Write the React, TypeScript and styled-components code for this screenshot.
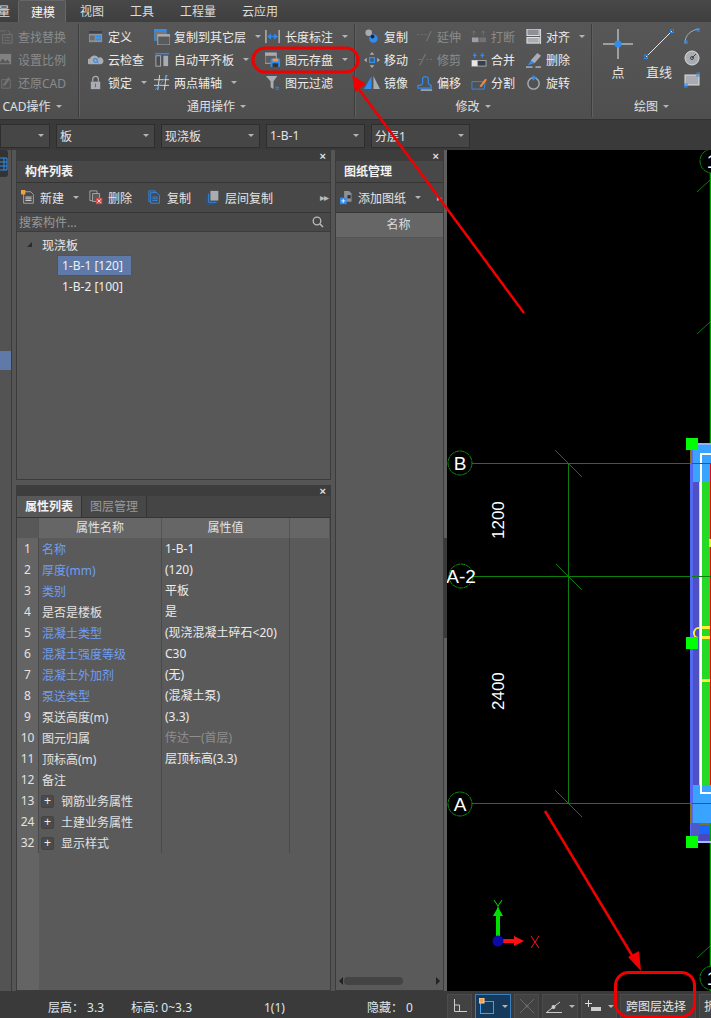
import React, { FC, ReactNode } from 'react'
import styled, { createGlobalStyle } from 'styled-components'

const GlobalStyle = createGlobalStyle`
  html, body {
    margin: 0;
    padding: 0;
    background: #3a3a3a;
  }
  body {
    font-family: "Noto Sans", "Noto Sans CJK SC", "Liberation Sans", sans-serif;
    font-size: 12px;
    color: #e4e4e4;
  }
  * { box-sizing: border-box; }
`

const B = '#2f8cf0'
const G = '#a9adb3'
const D = '#77797c'
const W = '#e6e8ea'

/* ribbon + toolbar icons, all on a 16x16 grid */
const icons: Record<string, ReactNode> = {
  find: <><rect x="5" y="6" width="10" height="9" fill="none" stroke={D} /><path d="M7 9h6M7 12h6" stroke={D} /><path d="M0 2h8M10 1l3 3-3 3" fill="none" stroke={D} /></>,
  scale: <><rect x="0" y="2" width="14" height="11" fill="#8a8a8a" /><path d="M1 12l4-5 3 3 2-2 3 4z" fill="#5a5a5a" /></>,
  restore: <><path d="M4 5h9v9H4z" fill="none" stroke={D} /><path d="M11 2L6 9l-1 3 3-1 5-7z" fill={D} /></>,
  define: <><rect x="1" y="2" width="14" height="12" fill="#8d9096" /><rect x="1" y="2" width="14" height="3" fill="#3e4045" /><rect x="8" y="7" width="6" height="2" fill={B} /><rect x="8" y="10" width="6" height="2" fill={B} /><rect x="2" y="7" width="5" height="5" fill="#6b6d72" /></>,
  cloud: <><path d="M2 13a3 3 0 010-6 5 5 0 019-1 3.500 3.500 0 013 7z" fill={G} /><circle cx="8" cy="9" r="2" fill="none" stroke={B} strokeWidth="1.300" /><path d="M9.500 10.500l2 1.500" stroke={B} /></>,
  lock: <><path d="M5 7V4.500a3 3 0 016 0V7" fill="none" stroke={G} strokeWidth="1.300" /><rect x="3" y="7" width="10" height="8" fill={G} /><rect x="7.500" y="9" width="1" height="4" fill="#666" /></>,
  copyLayer: <><rect x="0" y="0" width="13" height="12" fill="#777" stroke={B} /><rect x="0" y="0" width="13" height="3" fill={B} /><rect x="4" y="6" width="13" height="11" fill="#5a5a5a" stroke={G} /><rect x="4" y="6" width="13" height="2" fill={G} /></>,
  align: <><rect x="1" y="1" width="15" height="1.500" fill={B} /><rect x="2" y="4" width="5" height="11" fill="#4d4d4d" stroke={G} /><rect x="10" y="4" width="5" height="11" fill={G} /></>,
  axis: <><path d="M0 5h16M0 11h16M6 0L4 16M13 0l-2 16" stroke={W} strokeWidth="0.900" /><path d="M1 16L15 0" stroke={B} /></>,
  dim: <><path d="M1 1v14M15 1v14" stroke={W} /><path d="M3 8h10M3 8l3-2.500v5zM13 8l-3-2.500v5z" stroke={B} fill={B} /></>,
  save: <><rect x="0" y="1" width="12" height="11" fill="#5b5d61" stroke={G} /><rect x="0" y="1" width="12" height="3" fill={G} /><rect x="6" y="7" width="10" height="9" fill={B} /><rect x="8" y="7" width="6" height="3" fill="#f59a3c" /><rect x="8" y="12" width="6" height="4" fill="#333" /></>,
  filter: <><path d="M1 1h12L9 7v8l-3-2V7z" fill={G} /><path d="M11 13h4M11 15h4" stroke={B} /></>,
  mcopy: <><circle cx="5" cy="4" r="3.500" fill={G} /><circle cx="10" cy="10" r="4.500" fill={B} /><circle cx="9" cy="8" r="2" fill="#222" /></>,
  move: <><rect x="6" y="6" width="5" height="5" fill="none" stroke={B} strokeWidth="1.500" /><path d="M8.500 0l-2.500 3h5zM8.500 17l-2.500-3h5zM0 8.500l3-2.500v5zM17 8.500l-3-2.500v5z" fill={G} /></>,
  mirror: <><path d="M8 1L0 15h8z" fill={B} /><path d="M10 1l7 14h-7z" fill={G} /></>,
  extend: <><path d="M0 6h2M4 6h2M8 6h2" stroke={D} /><path d="M10 13L15 2" stroke={D} strokeWidth="1.300" /></>,
  trim: <><path d="M1 8h4M10 8h2M14 8h2" stroke={D} /><path d="M3 14L9 2" stroke={D} strokeWidth="1.300" /></>,
  offset: <><path d="M1 14v-3h3l2-2V4a2 2 0 012-2h2a2 2 0 012 2v5l2 2h1v3z" fill="none" stroke={B} strokeWidth="1.300" /><path d="M4 16h12" stroke={W} /></>,
  breakIt: <><rect x="1" y="9" width="7" height="5" fill={G} /><rect x="9" y="9" width="7" height="5" fill={D} /><path d="M3 2v5M1 4l2-2 2 2M13 2v5M11 4l2-2 2 2" fill="none" stroke={D} /></>,
  merge: <><rect x="1" y="9" width="15" height="6" fill="#3b3e44" stroke={G} /><rect x="1" y="9" width="6" height="6" fill={W} /><path d="M4 1v5M2 3.500h4M12 1v5M10 3.500h4" stroke={B} strokeWidth="1.300" /></>,
  split: <><path d="M1 7h14l-1 8H1z" fill="none" stroke={B} /><path d="M5 7l2 8M9 12l6-8 2 1-6 8z" fill="#f0883a" stroke="none" /></>,
  alignIt: <><rect x="1" y="0" width="13" height="7" fill="#8d9096" stroke={W} /><rect x="1" y="9" width="13" height="6" fill={G} stroke={W} /><path d="M15.500 0v16" stroke={W} /></>,
  erase: <><path d="M5 9L12 1l4 3-7 8z" fill={G} /><path d="M5 9l-3 5 7-2z" fill={B} /><path d="M0 16h7M10 16h6" stroke={W} /></>,
  rotate: <><circle cx="8" cy="9" r="6" fill="none" stroke={G} strokeWidth="1.500" /><path d="M7 0l5 3-5 3z" fill={B} /></>,
  newDoc: <><path d="M3 2h8l3 3v10H3z" fill="none" stroke={G} /><path d="M5 8h7M5 10h7M5 12h7" stroke={W} /><rect x="0" y="0" width="5" height="5" fill="#f2a03c" /></>,
  delDoc: <><path d="M1 1h8v11H1z" fill="none" stroke={G} /><path d="M4 4h8v9H4z" fill="#5a5a5a" stroke={G} /><rect x="8" y="9" width="7" height="7" fill="#d84a4a" /><path d="M9.500 10.500l4 4M13.500 10.500l-4 4" stroke="#fff" /></>,
  copyDoc: <><path d="M1 1h7v12H1z" fill="none" stroke={B} /><path d="M3 3h7l3 3v9H3z" fill="#4a4a4a" stroke={B} /><path d="M5 8h6M5 10h6M5 12h6" stroke={B} /></>,
  floorDoc: <><rect x="5" y="1" width="9" height="11" fill={G} /><path d="M3 4v10h9" fill="none" stroke={B} /><path d="M1 6v10h9" fill="none" stroke="#24598f" /></>,
  addDoc: <><path d="M5 0h6l3 3v10H5z" fill="#8d9096" /><rect x="9" y="5" width="4" height="4" fill="#333" /><rect x="0" y="8" width="8" height="8" fill={B} /><path d="M4 9.500v5M1.500 12h5" stroke="#fff" /></>,
}

const Icon: FC<{ name: string; size?: number }> = ({ name, size = 16 }) => (
  <IconSvg width={size} height={size} viewBox="0 0 17 17">{icons[name]}</IconSvg>
)

const ribbonGroups = [
  {
    label: 'CAD操作', width: 79, pad: -2, labelShift: 14,
    cols: [{ w: 79, tools: [
      { icon: 'find', text: '查找替换', off: true },
      { icon: 'scale', text: '设置比例', off: true },
      { icon: 'restore', text: '还原CAD', off: true },
    ] }],
  },
  {
    label: '通用操作', width: 276, pad: 9, labelShift: 0,
    cols: [
      { w: 66, tools: [
        { icon: 'define', text: '定义' },
        { icon: 'cloud', text: '云检查' },
        { icon: 'lock', text: '锁定', caret: true },
      ] },
      { w: 111, tools: [
        { icon: 'copyLayer', text: '复制到其它层', caret: true },
        { icon: 'align', text: '自动平齐板', caret: true },
        { icon: 'axis', text: '两点辅轴', caret: true },
      ] },
      { w: 88, tools: [
        { icon: 'dim', text: '长度标注', caret: true },
        { icon: 'save', text: '图元存盘', caret: true },
        { icon: 'filter', text: '图元过滤' },
      ] },
    ],
  },
  {
    label: '修改', width: 237, pad: 9, labelShift: 0,
    cols: [
      { w: 53, tools: [
        { icon: 'mcopy', text: '复制' },
        { icon: 'move', text: '移动' },
        { icon: 'mirror', text: '镜像' },
      ] },
      { w: 54, tools: [
        { icon: 'extend', text: '延伸', off: true },
        { icon: 'trim', text: '修剪', off: true },
        { icon: 'offset', text: '偏移' },
      ] },
      { w: 55, tools: [
        { icon: 'breakIt', text: '打断', off: true },
        { icon: 'merge', text: '合并' },
        { icon: 'split', text: '分割' },
      ] },
      { w: 60, tools: [
        { icon: 'alignIt', text: '对齐', caret: true },
        { icon: 'erase', text: '删除' },
        { icon: 'rotate', text: '旋转' },
      ] },
    ],
  },
]

const selects = [
  { w: 50, text: '' },
  { w: 99, text: '板' },
  { w: 99, text: '现浇板' },
  { w: 99, text: '1-B-1' },
  { w: 99, text: '分层1' },
]

const props = [
  { n: 1, name: '名称', value: '1-B-1', pub: true },
  { n: 2, name: '厚度(mm)', value: '(120)', pub: true },
  { n: 3, name: '类别', value: '平板', pub: true },
  { n: 4, name: '是否是楼板', value: '是' },
  { n: 5, name: '混凝土类型', value: '(现浇混凝土碎石<20)', pub: true },
  { n: 6, name: '混凝土强度等级', value: 'C30', pub: true },
  { n: 7, name: '混凝土外加剂', value: '(无)', pub: true },
  { n: 8, name: '泵送类型', value: '(混凝土泵)', pub: true },
  { n: 9, name: '泵送高度(m)', value: '(3.3)' },
  { n: 10, name: '图元归属', value: '传达一(首层)', off: true },
  { n: 11, name: '顶标高(m)', value: '层顶标高(3.3)' },
  { n: 12, name: '备注', value: '' },
  { n: 13, name: '钢筋业务属性', value: '', group: true },
  { n: 24, name: '土建业务属性', value: '', group: true },
  { n: 32, name: '显示样式', value: '', group: true },
]

const PanelStrip: FC = () => (
  <Strip>
    <CloseGlyph>×</CloseGlyph>
  </Strip>
)

const GridBubble: FC<{ x: number; y: number; label: string; size?: number }> = ({ x, y, label, size = 19 }) => (
  <>
    <circle cx={x} cy={y} r="12" fill="#000" stroke="#0a8a0a" strokeDasharray="5 0.600" />
    <text x={x} y={y + size * 0.36} fontSize={size} fontFamily="Liberation Sans, sans-serif" fill="#fff" textAnchor="middle">{label}</text>
  </>
)

// canvas coordinates are page coordinates minus (447, 150)
const CadDrawing: FC = () => (
  <CanvasSvg width="264" height="841" viewBox="447 150 264 841">
    <g stroke="#0a7f0a" strokeWidth="1" fill="none" shapeRendering="crispEdges">
      <path d="M568.500 463V803" />
    </g>
    <g stroke="#0a7f0a" strokeWidth="1" fill="none">
      <path d="M555 450l27 27M556 564l26 26M555 790l27 27M697 192l13-12M697 334l13-12M697 958l13-12" />
    </g>
    <path d="M710.500 150V991" stroke="#00a800" strokeWidth="1.500" />
    <text transform="translate(504 539) rotate(-90)" fontSize="17" fontFamily="Liberation Sans, sans-serif" fill="#fff">1200</text>
    <text transform="translate(504 710) rotate(-90)" fontSize="17" fontFamily="Liberation Sans, sans-serif" fill="#fff">2400</text>

    {/* slab strip on the right edge */}
    <g shapeRendering="crispEdges">
      <rect x="693" y="443" width="18" height="2" fill="#8fb0ff" />
      <rect x="690" y="445" width="3" height="396" fill="#5468f5" />
      <rect x="693" y="445" width="18" height="38" fill="#39a4ff" />
      <rect x="693" y="482" width="6" height="303" fill="#4f50c4" />
      <rect x="699" y="482" width="3" height="303" fill="#d0d8d0" />
      <rect x="702" y="482" width="8" height="303" fill="#25da25" />
      <rect x="710" y="463" width="1" height="340" fill="#ff0000" />
      <rect x="700" y="453" width="11" height="2" fill="#fff" />
      <rect x="700" y="453" width="2" height="342" fill="#fff" />
      <rect x="693" y="785" width="18" height="38" fill="#39a4ff" />
      <rect x="700" y="792" width="11" height="2" fill="#fff" />
      <rect x="700" y="785" width="2" height="9" fill="#fff" />
      <rect x="691" y="823" width="8" height="18" fill="#5058c8" />
      <rect x="699" y="823" width="11" height="2" fill="#807020" />
      <rect x="699" y="825" width="11" height="9" fill="#1a66ff" />
      <rect x="699" y="834" width="11" height="7" fill="#4848c0" />
      <rect x="693" y="841" width="18" height="2" fill="#a8bcff" />
      <rect x="690" y="450" width="1" height="13" fill="#807020" />
      <rect x="690" y="803" width="1" height="20" fill="#807020" />
      <rect x="702" y="626" width="8" height="3" fill="#ffee33" />
      <rect x="702" y="636" width="8" height="3" fill="#ffee33" />
      <rect x="702" y="679" width="8" height="3" fill="#ffee33" />
      <rect x="709" y="539" width="2" height="8" fill="#ffee33" />
    </g>
    <path d="M700 628a5 5 0 00-2 10" fill="none" stroke="#ffee33" strokeWidth="2" />

    {/* axis lines run over the slab */}
    <g stroke="#0a7f0a" strokeWidth="1" fill="none" shapeRendering="crispEdges">
      <path d="M460 463.500H690M692 463.500H711M460 576.500H690M692 576.500H711M460 803.500H690M692 803.500H711" />
    </g>
    <GridBubble x={460} y={463} label="B" />
    <GridBubble x={461} y={576} label="A-2" />
    <GridBubble x={460} y={804} label="A" />
    <GridBubble x={712} y={161} label="1" />
    <GridBubble x={712} y={978} label="1" />

    <g fill="#00ff00" shapeRendering="crispEdges">
      <rect x="686" y="438" width="12" height="12" />
      <rect x="686" y="637" width="12" height="12" />
      <rect x="686" y="836" width="12" height="12" />
    </g>

    {/* UCS marker */}
    <path d="M496 936V916h-3l5-9 5 9h-3v20z" fill="#00e000" />
    <path d="M498 939h16v-3l10 5-10 5v-3h-16z" fill="#ff1010" />
    <circle cx="498" cy="941" r="5.500" fill="#0a0aa8" />
    <path d="M494 900l4 6 4-6M498 906v6" fill="none" stroke="#00e000" />
    <path d="M531 936l8 12M539 936l-8 12" fill="none" stroke="#ff1010" />
  </CanvasSvg>
)

const Annotations: FC = () => (
  <Overlay width="711" height="1018" viewBox="0 0 711 1018">
    <g fill="none" stroke="#f00000" strokeWidth="3">
      <rect x="253" y="48" width="105" height="24" rx="12" />
      <rect x="615.500" y="972.500" width="79" height="44" rx="13" />
      <path d="M524 313L358 88" strokeWidth="2.500" />
      <path d="M545 811L633 957" strokeWidth="2.500" />
    </g>
    <path d="M352 75l14 9-11 8z" fill="#f00000" />
    <path d="M641 971l-13-14 11-6z" fill="#f00000" />
  </Overlay>
)

const App: FC = () => {
  return (
    <Page>
      <GlobalStyle />

      <TabBar>
        <Tab $w={18} $clip>量</Tab>
        <Tab $w={48} $active>建模</Tab>
        <Tab $w={38}>视图</Tab>
        <Tab $w={50}>工具</Tab>
        <Tab $w={62}>工程量</Tab>
        <Tab $w={62}>云应用</Tab>
      </TabBar>

      <Ribbon>
        {ribbonGroups.map((g) => (
          <RibbonGroup key={g.label} $w={g.width}>
            <GroupBody $pad={g.pad}>
              {g.cols.map((col, i) => (
                <ToolColumn key={i} $w={col.w}>
                  {col.tools.map((t) => (
                    <Tool key={t.text} $off={t.off}>
                      <Icon name={t.icon} />
                      <span>{t.text}</span>
                      {t.caret && <Caret />}
                    </Tool>
                  ))}
                </ToolColumn>
              ))}
            </GroupBody>
            <GroupLabel $shift={g.labelShift}>{g.label}<Caret /></GroupLabel>
          </RibbonGroup>
        ))}

        <DrawGroup>
          <GroupBody $pad={11}>
            <BigTool $w={41}>
              <IconSvg width="30" height="30" viewBox="0 0 30 30">
                <path d="M15 0v30M0 15h30" stroke={W} />
                <circle cx="15" cy="15" r="3.500" fill={B} />
              </IconSvg>
              <span>点</span>
            </BigTool>
            <BigTool $w={40}>
              <IconSvg width="30" height="30" viewBox="0 0 30 30">
                <path d="M2 28L28 2" stroke={W} />
                <rect x="0" y="26" width="3.500" height="3.500" fill="none" stroke={B} />
                <rect x="26.500" y="0" width="3.500" height="3.500" fill="none" stroke={B} />
              </IconSvg>
              <span>直线</span>
            </BigTool>
            <MiniIcons>
              <IconSvg width="16" height="16" viewBox="0 0 16 16">
                <path d="M1 15C1 7 7 2 15 1" fill="none" stroke={G} />
                <rect x="13" y="0" width="3" height="3" fill="none" stroke={B} />
                <rect x="0" y="13" width="3" height="3" fill="none" stroke={B} />
              </IconSvg>
              <IconSvg width="16" height="16" viewBox="0 0 16 16">
                <circle cx="8" cy="8" r="7" fill={G} stroke="#ddd" />
                <circle cx="8" cy="8" r="1.500" fill="none" stroke="#444" />
                <path d="M8 8l4-4" stroke="#444" />
              </IconSvg>
              <IconSvg width="16" height="16" viewBox="0 0 16 16">
                <rect x="1" y="3" width="14" height="10" fill={G} stroke="#ddd" />
                <rect x="13" y="1" width="3" height="3" fill="none" stroke={B} />
                <rect x="0" y="12" width="3" height="3" fill="none" stroke={B} />
              </IconSvg>
            </MiniIcons>
          </GroupBody>
          <GroupLabel $shift={0}>绘图<Caret /></GroupLabel>
        </DrawGroup>
      </Ribbon>

      <SelectBar>
        {selects.map((s, i) => (
          <SelectBox key={i} $w={s.w}>
            <span>{s.text}</span>
            <Caret />
          </SelectBox>
        ))}
      </SelectBar>

      <Main>
        <SideStrip>
          <SideButton>
            <IconSvg width="8" height="14" viewBox="0 0 8 14">
              <path d="M0 1h7v12H0M0 5h7M0 9h7M4 1v12" fill="none" stroke={B} />
            </IconSvg>
          </SideButton>
          <SideSelected />
        </SideStrip>

        <PanelColumn>
          <ListPanel>
            <PanelStrip />
            <PanelTitle>构件列表</PanelTitle>
            <PanelToolbar>
              <PanelTool $w={68}><Icon name="newDoc" size={15} /><span>新建</span><Caret /></PanelTool>
              <PanelTool $w={59}><Icon name="delDoc" size={15} /><span>删除</span></PanelTool>
              <PanelTool $w={58}><Icon name="copyDoc" size={15} /><span>复制</span></PanelTool>
              <PanelTool $w={80}><Icon name="floorDoc" size={15} /><span>层间复制</span></PanelTool>
              <MoreGlyph>▸▸</MoreGlyph>
            </PanelToolbar>
            <SearchRow>
              <span>搜索构件...</span>
              <IconSvg width="12" height="12" viewBox="0 0 12 12">
                <circle cx="5" cy="5" r="3.800" fill="none" stroke="#bbb" strokeWidth="1.300" />
                <path d="M8 8l3 3" stroke="#bbb" strokeWidth="1.500" />
              </IconSvg>
            </SearchRow>
            <Tree>
              <TreeRoot><TreeArrow />现浇板</TreeRoot>
              <TreeLeaf $selected>1-B-1 [120]</TreeLeaf>
              <TreeLeaf>1-B-2 [100]</TreeLeaf>
            </Tree>
          </ListPanel>

          <PropsPanel>
            <PanelStrip />
            <PropTabs>
              <PropTab $active>属性列表</PropTab>
              <PropTab>图层管理</PropTab>
            </PropTabs>
            <PropHeader>
              <HeadCell $blank />
              <HeadCell>属性名称</HeadCell>
              <HeadCell>属性值</HeadCell>
              <HeadCell />
            </PropHeader>
            <PropBody>
              {props.map((p) => (
                <PropRow key={p.n}>
                  <IndexCell>{p.n}</IndexCell>
                  <NameCell $pub={p.pub} $group={p.group}>
                    {p.group && <PlusBox>+</PlusBox>}
                    {p.name}
                  </NameCell>
                  <ValueCell $off={p.off}>{p.value}</ValueCell>
                </PropRow>
              ))}
            </PropBody>
          </PropsPanel>
        </PanelColumn>

        <DrawingPanel>
          <PanelStrip />
          <PanelTitle>图纸管理</PanelTitle>
          <PanelToolbar $tight>
            <PanelTool $w={88}><Icon name="addDoc" size={14} /><span>添加图纸</span><Caret /></PanelTool>
            <MoreGlyph>▸</MoreGlyph>
          </PanelToolbar>
          <NameHeader>名称</NameHeader>
          <DrawingList />
          <ScrollRow>
            <ScrollArrow $left />
            <ScrollThumb />
            <ScrollArrow />
          </ScrollRow>
        </DrawingPanel>

        <Splitter>
          <SplitHandle />
        </Splitter>

        <CadDrawing />
      </Main>

      <StatusBar>
        <StatusInfo>
          <InfoText $w={83}>层高： 3.3</InfoText>
          <InfoText $w={133}>标高: 0~3.3</InfoText>
          <InfoText $w={103}>1(1)</InfoText>
          <InfoText $w={70}>隐藏： 0</InfoText>
        </StatusInfo>
        <StatusButtons>
          <StatusButton $w={25}>
            <IconSvg width="14" height="14" viewBox="0 0 14 14"><path d="M1.500 0v12.500H14M1.500 6h5v6.500" fill="none" stroke="#ccc" /></IconSvg>
          </StatusButton>
          <StatusButton $w={36} $active>
            <IconSvg width="16" height="16" viewBox="0 0 16 16">
              <rect x="1.500" y="3.500" width="13" height="12" fill="none" stroke="#4a9be8" />
              <rect x="0" y="0" width="5" height="5" fill="#f0a050" stroke="#ffd0a0" />
            </IconSvg>
            <Caret />
          </StatusButton>
          <StatusButton $w={25}>
            <IconSvg width="16" height="16" viewBox="0 0 16 16"><path d="M1 1l14 14M15 1L1 15" stroke="#6a6a6a" /><circle cx="8" cy="8" r="1.500" fill="#6a6a6a" /></IconSvg>
          </StatusButton>
          <StatusButton $w={36}>
            <IconSvg width="16" height="14" viewBox="0 0 16 14"><path d="M0 13.500h16M1 13L14 3" stroke="#ccc" /><circle cx="7.500" cy="8" r="2" fill="#ccc" /></IconSvg>
            <Caret />
          </StatusButton>
          <StatusButton $w={36}>
            <IconSvg width="16" height="14" viewBox="0 0 16 14"><path d="M3.500 1v7M0 4.500h7" stroke="#ddd" /><rect x="6" y="8" width="10" height="4" fill="#ccc" /></IconSvg>
            <Caret />
          </StatusButton>
          <StatusButton $w={76} $text>跨图层选择</StatusButton>
          <StatusButton $w={30} $cut>折</StatusButton>
        </StatusButtons>
      </StatusBar>

      <Annotations />
    </Page>
  )
}

const Page = styled.div`
  position: relative;
  width: 711px;
  height: 1018px;
  overflow: hidden;
  display: flex;
  flex-direction: column;
  background: #3a3a3a;
`

const IconSvg = styled.svg`
  display: block;
  flex: none;
`

const Overlay = styled.svg`
  position: absolute;
  left: 0;
  top: 0;
  pointer-events: none;
`

const TabBar = styled.div`
  height: 22px;
  flex: none;
  display: flex;
  background: linear-gradient(#484848, #3f3f3f);
`

const Tab = styled.div<{ $w: number; $active?: boolean; $clip?: boolean }>`
  width: ${({ $w }) => $w}px;
  flex: none;
  line-height: 24px;
  font-size: 12px;
  overflow: hidden;
  color: ${({ $active }) => ($active ? '#f4f4f4' : '#dcdcdc')};
  padding-left: ${({ $active }) => ($active ? '12px' : '0')};
  text-align: ${({ $active, $clip }) => ($active || $clip ? 'left' : 'right')};
  text-indent: ${({ $clip }) => ($clip ? '-2px' : '0')};
  background: ${({ $active }) => ($active ? '#555' : 'transparent')};
  border: ${({ $active }) => ($active ? '1px solid #666' : 'none')};
  border-bottom: none;
  border-radius: 2px 2px 0 0;
`

const Ribbon = styled.div`
  height: 98px;
  flex: none;
  display: flex;
  overflow: hidden;
  padding-top: 2px;
  background: linear-gradient(#575757, #4f4f4f);
  border-bottom: 1px solid #333;
`

const RibbonGroup = styled.div<{ $w: number }>`
  width: ${({ $w }) => $w}px;
  flex: none;
  display: flex;
  flex-direction: column;
  height: 93px;
  overflow: hidden;
  border-right: 1px solid #3d3d3d;
  box-shadow: 1px 0 0 #606060;
`

const DrawGroup = styled.div`
  flex: 1;
  display: flex;
  flex-direction: column;
  height: 93px;
`

const GroupBody = styled.div<{ $pad: number }>`
  flex: 1;
  display: flex;
  padding-top: 1px;
  margin-left: ${({ $pad }) => $pad}px;
`

const ToolColumn = styled.div<{ $w: number }>`
  width: ${({ $w }) => $w}px;
  flex: none;
  display: flex;
  flex-direction: column;
`

const Tool = styled.div<{ $off?: boolean }>`
  height: 23px;
  display: flex;
  align-items: center;
  gap: 4px;
  white-space: nowrap;
  color: ${({ $off }) => ($off ? '#8b8b8b' : '#ececec')};

  svg {
    opacity: ${({ $off }) => ($off ? 0.85 : 1)};
  }
`

const Caret = styled.i`
  display: inline-block;
  flex: none;
  width: 0;
  height: 0;
  margin-left: 5px;
  border-left: 3.500px solid transparent;
  border-right: 3.500px solid transparent;
  border-top: 3.500px solid #b4b4b4;
`

const BigTool = styled.div<{ $w: number }>`
  width: ${({ $w }) => $w}px;
  flex: none;
  display: flex;
  flex-direction: column;
  gap: 3px;
  padding-top: 4px;
  font-size: 13px;

  span {
    width: 30px;
    text-align: center;
    white-space: nowrap;
  }
`

const MiniIcons = styled.div`
  display: flex;
  flex-direction: column;
  gap: 6px;
  padding-top: 3px;
`

const GroupLabel = styled.div<{ $shift: number }>`
  height: 22px;
  flex: none;
  display: flex;
  align-items: center;
  justify-content: center;
  padding-right: ${({ $shift }) => $shift}px;
  color: #e0e0e0;
  white-space: nowrap;
`

const SelectBar = styled.div`
  height: 30px;
  flex: none;
  display: flex;
  align-items: center;
  gap: 6px;
  padding-top: 1px;
  background: #3a3a3a;
`

const SelectBox = styled.div<{ $w: number }>`
  width: ${({ $w }) => $w}px;
  height: 24px;
  flex: none;
  display: flex;
  align-items: center;
  justify-content: space-between;
  padding: 0 5px 0 3px;
  background: #464646;
  border: 1px solid #2e2e2e;
`

const Main = styled.div`
  flex: 1;
  min-height: 0;
  display: flex;
  background: #555;
`

const SideStrip = styled.div`
  width: 12px;
  flex: none;
  display: flex;
  flex-direction: column;
  background: #535353;
  border-right: 1px solid #3b3b3b;
`

const SideButton = styled.div`
  width: 8px;
  height: 27px;
  display: flex;
  align-items: center;
  background: #333;
  border-radius: 0 3px 3px 0;
`

const SideSelected = styled.div`
  height: 19px;
  margin-top: 174px;
  background: #5f7aa8;
`

const PanelColumn = styled.div`
  width: 315px;
  flex: none;
  margin-left: 4px;
  display: flex;
  flex-direction: column;
  gap: 5px;
`

const ListPanel = styled.section`
  height: 330px;
  flex: none;
  display: flex;
  flex-direction: column;
  border: 1px solid #3c3c3c;
  border-top: none;
  background: #585858;
`

const PropsPanel = styled.section`
  flex: 1;
  min-height: 0;
  display: flex;
  flex-direction: column;
  border: 1px solid #3c3c3c;
  border-top: none;
  background: #5a5a5a;
`

const DrawingPanel = styled.section`
  width: 109px;
  flex: none;
  margin-left: 4px;
  display: flex;
  flex-direction: column;
  border: 1px solid #3c3c3c;
  border-top: none;
  background: #5a5a5a;
`

const Strip = styled.div`
  height: 11px;
  flex: none;
  display: flex;
  justify-content: flex-end;
  align-items: center;
  padding-right: 4px;
  background: #3d3d3d;
`

const CloseGlyph = styled.span`
  font: bold 11px/10px "Liberation Sans", sans-serif;
  color: #ddd;
`

const PanelTitle = styled.div`
  height: 22px;
  flex: none;
  padding-left: 8px;
  line-height: 22px;
  font-weight: 700;
  color: #f2f2f2;
  background: #484848;
  border-bottom: 1px solid #353535;
`

const PanelToolbar = styled.div<{ $tight?: boolean }>`
  height: 30px;
  flex: none;
  display: flex;
  align-items: center;
  padding-left: 4px;
  background: #484848;
  border-bottom: 1px solid #353535;
`

const PanelTool = styled.div<{ $w: number }>`
  width: ${({ $w }) => $w}px;
  flex: none;
  display: flex;
  align-items: center;
  gap: 4px;
  white-space: nowrap;
`

const MoreGlyph = styled.span`
  margin-left: auto;
  padding-right: 2px;
  font: 10px/10px "DejaVu Sans", sans-serif;
  letter-spacing: -1px;
  color: #bbb;
`

const SearchRow = styled.div`
  height: 19px;
  flex: none;
  display: flex;
  align-items: center;
  justify-content: space-between;
  padding: 0 6px 0 2px;
  color: #999;
  background: #484848;
  border-bottom: 1px solid #3c3c3c;
`

const Tree = styled.div`
  flex: 1;
  padding-top: 2px;
  background: #585858;
`

const TreeRoot = styled.div`
  height: 21px;
  display: flex;
  align-items: center;
  gap: 9px;
  padding-left: 10px;
  color: #eaeaea;
`

const TreeArrow = styled.i`
  width: 0;
  height: 0;
  border-left: 5px solid transparent;
  border-bottom: 5px solid #2b2b2b;
  margin-right: 1px;
`

const TreeLeaf = styled.div<{ $selected?: boolean }>`
  width: 75px;
  height: 21px;
  margin-left: 40px;
  padding-left: 4px;
  line-height: 19px;
  white-space: nowrap;
  color: #efefef;
  background: ${({ $selected }) => ($selected ? '#5f7aa8' : 'transparent')};
  border: 1px solid ${({ $selected }) => ($selected ? '#47566f' : 'transparent')};
`

const PropTabs = styled.div`
  height: 22px;
  flex: none;
  display: flex;
  background: #454545;
  border-bottom: 1px solid #353535;
`

const PropTab = styled.div<{ $active?: boolean }>`
  width: 65px;
  padding-left: 8px;
  line-height: 21px;
  font-weight: ${({ $active }) => ($active ? 700 : 400)};
  color: ${({ $active }) => ($active ? '#f2f2f2' : '#999')};
  background: ${({ $active }) => ($active ? '#585858' : '#474747')};
  border-right: 1px solid #333;
`

const PropHeader = styled.div`
  height: 20px;
  flex: none;
  display: grid;
  grid-template-columns: 22px 123px 128px 1fr;
`

const HeadCell = styled.div<{ $blank?: boolean }>`
  text-align: center;
  line-height: 19px;
  color: #e2e2e2;
  background: ${({ $blank }) => ($blank ? '#585858' : '#666')};
  border-right: 1px solid #555;
`

const PropBody = styled.div`
  flex: 1;
  background: linear-gradient(90deg, #646464 22px, #5a5a5a 22px);
`

const PropRow = styled.div`
  width: 273px;
  height: 21px;
  display: grid;
  grid-template-columns: 22px 123px 128px;
  border-bottom: 1px solid #4a4a4a;
`

const IndexCell = styled.div`
  text-align: center;
  line-height: 21px;
  color: #e2e2e2;
  background: #646464;
  border-right: 1px solid #4a4a4a;
`

const NameCell = styled.div<{ $pub?: boolean; $group?: boolean }>`
  display: flex;
  align-items: center;
  gap: 7px;
  padding: 1px 0 0 ${({ $group }) => ($group ? '2px' : '3px')};
  white-space: nowrap;
  color: ${({ $pub }) => ($pub ? '#6f9ef2' : '#e2e2e2')};
  background: #5a5a5a;
  border-right: 1px solid #4a4a4a;
`

const PlusBox = styled.span`
  width: 13px;
  height: 13px;
  flex: none;
  display: flex;
  align-items: center;
  justify-content: center;
  font: 12px/12px "Liberation Sans", sans-serif;
  color: #eee;
  background: #4a4a4a;
  border: 1px solid #444;
  border-radius: 2px;
`

const ValueCell = styled.div<{ $off?: boolean }>`
  padding-left: 3px;
  line-height: 21px;
  white-space: nowrap;
  overflow: hidden;
  color: ${({ $off }) => ($off ? '#8e8e8e' : '#ececec')};
  background: #5a5a5a;
  border-right: 1px solid #4a4a4a;
`

const NameHeader = styled.div`
  height: 25px;
  flex: none;
  padding-left: 18px;
  text-align: center;
  line-height: 24px;
  color: #dcdcdc;
  background: #666;
  border-bottom: 1px solid #555;
`

const DrawingList = styled.div`
  flex: 1;
`

const ScrollRow = styled.div`
  height: 14px;
  flex: none;
  display: flex;
  align-items: center;
  gap: 1px;
  padding: 0 3px;
  margin-bottom: 2px;
`

const ScrollArrow = styled.i<{ $left?: boolean }>`
  width: 0;
  height: 0;
  margin-left: ${({ $left }) => ($left ? '0' : 'auto')};
  border-top: 4px solid transparent;
  border-bottom: 4px solid transparent;
  border-right: ${({ $left }) => ($left ? '4px solid #222' : 'none')};
  border-left: ${({ $left }) => ($left ? 'none' : '4px solid #222')};
`

const ScrollThumb = styled.div`
  width: 59px;
  height: 8px;
  background: #444;
  border-radius: 4px;
`

const Splitter = styled.div`
  width: 3px;
  flex: none;
  display: flex;
  align-items: center;
  background: #5e5e5e;
`

const SplitHandle = styled.div`
  width: 3px;
  height: 100px;
  margin-top: 34px;
  background: #3a3a3a;
`

const CanvasSvg = styled.svg`
  display: block;
  flex: none;
  background: #000;
`

const StatusBar = styled.footer`
  height: 27px;
  flex: none;
  display: flex;
  background: #3a3a3a;
  overflow: hidden;
`

const StatusInfo = styled.div`
  width: 447px;
  flex: none;
  display: flex;
  align-items: center;
  padding: 5px 0 0 48px;
`

const InfoText = styled.span<{ $w: number }>`
  width: ${({ $w }) => $w}px;
  flex: none;
  white-space: pre;
  color: #dfe6ee;
`

const StatusButtons = styled.div`
  flex: 1;
  display: flex;
  gap: 3px;
  padding-top: 3px;
`

const StatusButton = styled.div<{ $w: number; $active?: boolean; $cut?: boolean; $text?: boolean }>`
  width: ${({ $w }) => $w}px;
  height: 28px;
  flex: none;
  display: flex;
  align-items: center;
  justify-content: ${({ $cut }) => ($cut ? 'flex-start' : 'center')};
  padding: 0 ${({ $text }) => ($text ? '4px' : '0')} 4px ${({ $cut }) => ($cut ? '4px' : '0')};
  gap: 2px;
  white-space: nowrap;
  color: #e6e6e6;
  background: ${({ $active }) => ($active ? '#163a5c' : '#424242')};
  border: 1px solid ${({ $active }) => ($active ? '#3a80c0' : '#4c4c4c')};
`

export default App
